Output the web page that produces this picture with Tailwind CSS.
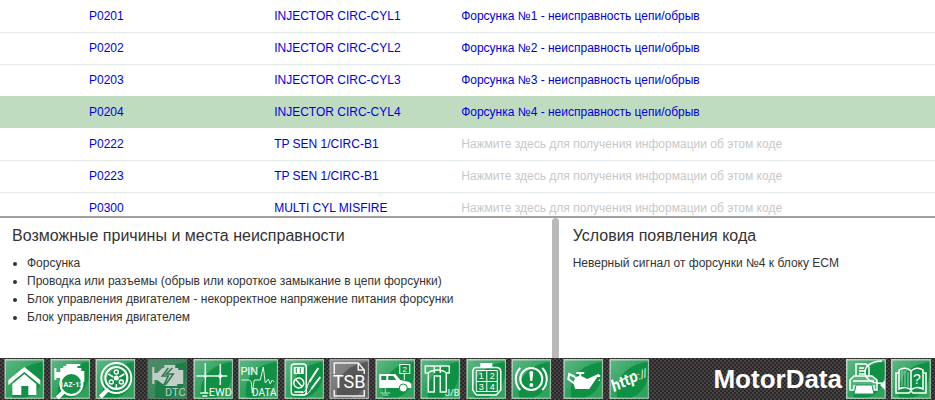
<!DOCTYPE html>
<html lang="ru">
<head>
  <title>MotorData</title>
  <meta charset="utf-8">
  <meta name="viewport" content="width=device-width, initial-scale=1.0">
  <script src="https://cdn.jsdelivr.net/npm/@tailwindcss/browser@4"></script>
</head>

<body class="flex flex-col h-screen overflow-hidden bg-white text-[#333] text-xs font-['Liberation_Sans',Arial,sans-serif]">

  <!-- shared button backgrounds -->
  <svg class="absolute w-0 h-0" aria-hidden="true">
    <defs>
      <linearGradient id="edge" x1="0" y1="0" x2="1" y2="1">
        <stop offset="0" stop-color="#c4d8ca" />
        <stop offset="1" stop-color="#8fb39c" />
      </linearGradient>
      <linearGradient id="face" x1="0" y1="0" x2="1" y2="1">
        <stop offset="0" stop-color="#5cb783" />
        <stop offset="0.5" stop-color="#2da35c" />
        <stop offset="1" stop-color="#2da35c" />
      </linearGradient>
      <linearGradient id="face-gray" x1="0" y1="0" x2="1" y2="1">
        <stop offset="0" stop-color="#8c8c8c" />
        <stop offset="1" stop-color="#606060" />
      </linearGradient>
      <linearGradient id="face-dim" x1="0" y1="0" x2="1" y2="1">
        <stop offset="0" stop-color="#4f8a68" />
        <stop offset="1" stop-color="#2a8a54" />
      </linearGradient>
      <symbol id="tile" viewBox="0 0 40 40">
        <rect width="40" height="40" fill="url(#edge)" />
        <rect x="1.5" y="1.5" width="37" height="37" fill="url(#face)" />
        <path d="M8 38.5C5 20 16 6 38.5 3V16C38 26 32 35 22 38.5Z" fill="#058a3c" opacity=".75" />
      </symbol>
      <symbol id="tile-gray" viewBox="0 0 40 40">
        <rect width="40" height="40" fill="#a8a8a8" />
        <rect x="1.5" y="1.5" width="37" height="37" fill="url(#face-gray)" />
        <path d="M8 38.5C5 20 16 6 38.5 3V16C38 26 32 35 22 38.5Z" fill="#4c4c4c" opacity=".75" />
      </symbol>
      <symbol id="tile-dim" viewBox="0 0 40 40">
        <rect width="40" height="40" fill="#587a66" />
        <rect x="1" y="1" width="38" height="38" fill="url(#face-dim)" />
        <path d="M8 39C5 20 16 6 39 3V16C38 26 32 35 22 39Z" fill="#157a40" opacity=".75" />
      </symbol>
    </defs>
  </svg>

  <main class="flex-1 min-h-0 overflow-hidden">
    <table class="w-full table-fixed text-left text-[#0000e0]">
      <colgroup>
        <col class="w-[29%]">
        <col class="w-[20%]">
        <col>
      </colgroup>
      <tbody>
        <tr class="h-8 border-b border-[#e4e9ec]">
          <td class="pl-[89px]"><a href="#p0201">P0201</a></td>
          <td class="pl-[3px]"><a href="#p0201">INJECTOR CIRC-CYL1</a></td>
          <td class="pl-[3px]"><a href="#p0201">Форсунка №1 - неисправность цепи/обрыв</a></td>
        </tr>
        <tr class="h-8 border-b border-[#e4e9ec]">
          <td class="pl-[89px]"><a href="#p0202">P0202</a></td>
          <td class="pl-[3px]"><a href="#p0202">INJECTOR CIRC-CYL2</a></td>
          <td class="pl-[3px]"><a href="#p0202">Форсунка №2 - неисправность цепи/обрыв</a></td>
        </tr>
        <tr class="h-8">
          <td class="pl-[89px]"><a href="#p0203">P0203</a></td>
          <td class="pl-[3px]"><a href="#p0203">INJECTOR CIRC-CYL3</a></td>
          <td class="pl-[3px]"><a href="#p0203">Форсунка №3 - неисправность цепи/обрыв</a></td>
        </tr>
        <tr class="h-8 bg-[#c0dcc0]">
          <td class="pl-[89px]"><a href="#p0204">P0204</a></td>
          <td class="pl-[3px]"><a href="#p0204">INJECTOR CIRC-CYL4</a></td>
          <td class="pl-[3px]"><a href="#p0204">Форсунка №4 - неисправность цепи/обрыв</a></td>
        </tr>
        <tr class="h-8 border-b border-[#e4e9ec]">
          <td class="pl-[89px]"><a href="#p0222">P0222</a></td>
          <td class="pl-[3px]"><a href="#p0222">TP SEN 1/CIRC-B1</a></td>
          <td class="pl-[3px]"><a href="#p0222" class="text-[#c8c8c8]">Нажмите здесь для получения информации об этом коде</a></td>
        </tr>
        <tr class="h-8 border-b border-[#e4e9ec]">
          <td class="pl-[89px]"><a href="#p0223">P0223</a></td>
          <td class="pl-[3px]"><a href="#p0223">TP SEN 1/CIRC-B1</a></td>
          <td class="pl-[3px]"><a href="#p0223" class="text-[#c8c8c8]">Нажмите здесь для получения информации об этом коде</a></td>
        </tr>
        <tr class="h-8">
          <td class="pl-[89px]"><a href="#p0300">P0300</a></td>
          <td class="pl-[3px]"><a href="#p0300">MULTI CYL MISFIRE</a></td>
          <td class="pl-[3px]"><a href="#p0300" class="text-[#c8c8c8]">Нажмите здесь для получения информации об этом коде</a></td>
        </tr>
      </tbody>
    </table>
  </main>

  <div class="flex h-[142px] border-t-2 border-[#a0a0a0]">
    <section class="w-[59%] px-3 pt-2">
      <h2 class="text-base leading-5">Возможные причины и места неисправности</h2>
      <ul class="list-disc pl-[15px] pt-2 leading-[18px]">
        <li>Форсунка</li>
        <li>Проводка или разъемы (обрыв или короткое замыкание в цепи форсунки)</li>
        <li>Блок управления двигателем - некорректное напряжение питания форсунки</li>
        <li>Блок управления двигателем</li>
      </ul>
    </section>
    <div class="w-[7px] rounded-t-sm bg-[#b9b9b9]"></div>
    <section class="flex-1 px-[14px] pt-2">
      <h2 class="text-base leading-5">Условия появления кода</h2>
      <p class="pt-2 leading-[18px]">Неверный сигнал от форсунки №4 к блоку ECM</p>
    </section>
  </div>

  <footer class="flex items-center h-[42px] px-1 text-white bg-[conic-gradient(#484446_25%,#2a2829_0_50%,#484446_0_75%,#2a2829_0)] bg-[length:4px_4px]">
    <nav class="grid grid-cols-3 gap-[5px] w-[132px]">
      <button type="button" aria-label="Home">
        <svg viewBox="0 0 40 40" class="block w-full h-10">
          <use href="#tile" />
          <path d="M4 21L20 8L36 21V26L20 13L4 26Z" fill="#fff" />
          <path d="M8 25L20 15L32 25V36H24V27H17V36H8Z" fill="#fff" />
        </svg>
      </button>
      <button type="button" aria-label="Engine">
        <svg viewBox="0 0 40 40" class="block w-full h-10">
          <use href="#tile" />
          <path d="M4 9H6V13H10V9H13V7H16V5H30V7H27V9H31V12H34V23H30V28H13L10 21V19H6V21H4Z" fill="#fff" />
          <circle cx="21" cy="25" r="11" fill="#169249" stroke="#fff" stroke-width="2" />
          <path d="M13 33L7 39" stroke="#fff" stroke-width="4" />
          <text x="21" y="28" text-anchor="middle" font-family="Roboto,sans-serif" font-size="7" font-weight="bold" fill="#fff">1AZ-13</text>
        </svg>
      </button>
      <button type="button" aria-label="Parts">
        <svg viewBox="0 0 40 40" class="block w-full h-10">
          <use href="#tile" />
          <path d="M13 30L5 38" stroke="#fff" stroke-width="4" />
          <g fill="none" stroke="#fff">
            <circle cx="21" cy="19" r="15" stroke-width="2" />
            <circle cx="21" cy="19" r="11" stroke-width="2" />
            <circle cx="21" cy="13" r="2" stroke-width="1.5" />
            <circle cx="16" cy="23" r="2" stroke-width="1.5" />
            <circle cx="26" cy="23" r="2" stroke-width="1.5" />
            <path d="M13 15L18 18M29 15L24 18M21 25V29" stroke-width="1.5" />
          </g>
          <circle cx="21" cy="19" r="2.5" fill="#fff" />
        </svg>
      </button>
    </nav>

    <nav class="grid grid-cols-9 gap-[5px] w-[405px] ml-[11px]">
      <button type="button" aria-label="DTC">
        <svg viewBox="0 0 40 40" class="block w-full h-10">
          <use href="#tile-dim" />
          <path d="M5 8H7V14H10L15 9H17V6H28V9H31V11H36V25H30V27H18L10 21H7V25H5Z" fill="#c3cec7" />
          <path d="M21 9L15 17L21 17L16 27M25 9L19 15L26 15L18 26" fill="none" stroke="#28784b" stroke-width="1.5" />
          <text x="28" y="37" text-anchor="middle" font-family="Roboto,sans-serif" font-size="11" fill="#c0d0c6">DTC</text>
        </svg>
      </button>
      <button type="button" aria-label="EWD">
        <svg viewBox="0 0 40 40" class="block w-full h-10">
          <use href="#tile" />
          <path d="M3 17H34M12 4V34M27 5V26M7 34H15M9 37H14" fill="none" stroke="#e9f5ee" stroke-width="1.5" />
          <circle cx="12" cy="17" r="1.5" fill="#fff" />
          <circle cx="27" cy="17" r="2" fill="#fff" />
          <text x="27" y="37" text-anchor="middle" font-family="Roboto,sans-serif" font-size="11" fill="#fff">EWD</text>
        </svg>
      </button>
      <button type="button" aria-label="PIN DATA">
        <svg viewBox="0 0 40 40" class="block w-full h-10">
          <use href="#tile" />
          <path d="M3 21H11L13 23L14 34L16 21H22L25 8L27 24L30 20L32 25L34 21L36 23" fill="none" stroke="#e4f2e9" />
          <text x="11" y="16" text-anchor="middle" font-family="Roboto,sans-serif" font-size="11" fill="#fff">PIN</text>
          <text x="26" y="37" text-anchor="middle" font-family="Roboto,sans-serif" font-size="10" fill="#fff">DATA</text>
        </svg>
      </button>
      <button type="button" aria-label="Multimeter">
        <svg viewBox="0 0 40 40" class="block w-full h-10">
          <use href="#tile" />
          <rect x="7" y="5" width="15" height="31" rx="3" fill="none" stroke="#fff" stroke-width="1.5" />
          <rect x="9.5" y="8" width="10" height="7" fill="#fff" />
          <path d="M12 9V14M16 9V14" stroke="#169249" />
          <circle cx="14.5" cy="24" r="5" fill="none" stroke="#fff" stroke-width="1.5" />
          <path d="M11 20L18 28M10 33H19" stroke="#fff" stroke-width="1.5" />
          <path d="M34 9L25 23M36 18L27 30" stroke="#fff" stroke-width="2" />
          <path d="M25 23C22 27 24 32 17 34M27 30C24 35 22 37 15 36" fill="none" stroke="#fff" />
        </svg>
      </button>
      <button type="button" aria-label="TSB">
        <svg viewBox="0 0 40 40" class="block w-full h-10">
          <use href="#tile-gray" />
          <path d="M5 15V4H29L35 11V15M29 4V11H35M5 31V37H35V31" fill="none" stroke="#f2f2f2" stroke-width="1.5" />
          <text x="20" y="29" text-anchor="middle" font-family="Roboto,sans-serif" font-size="18" fill="#fff">TSB</text>
        </svg>
      </button>
      <button type="button" aria-label="Component location">
        <svg viewBox="0 0 40 40" class="block w-full h-10">
          <use href="#tile" />
          <path d="M4 15H20L25 21L34 23L36 25V29H4Z" fill="#fff" />
          <path d="M6 17H11V21H6ZM13 17H18L21 21H13Z" fill="#15904a" />
          <circle cx="28" cy="29" r="4" fill="#fff" stroke="#15904a" />
          <path d="M10 29V34M5 34H15M7 36H13" stroke="#b8dcc6" />
          <path d="M29 15V21" stroke="#fff" />
          <rect x="24.5" y="5.5" width="10" height="9" fill="none" stroke="#fff" />
          <text x="29.5" y="13" text-anchor="middle" font-family="'Liberation Sans',sans-serif" font-size="8" fill="#fff">2</text>
        </svg>
      </button>
      <button type="button" aria-label="J/B">
        <svg viewBox="0 0 40 40" class="block w-full h-10">
          <use href="#tile" />
          <path d="M5 7H29V14H26V33H20V17H14V33H8V14H5ZM8 14C12 10 22 10 26 14M14 7V14M20 7V14" fill="none" stroke="#eef8f2" stroke-width="1.5" />
          <text x="32" y="37" text-anchor="middle" font-family="Roboto,sans-serif" font-size="9" fill="#fff">J/B</text>
        </svg>
      </button>
      <button type="button" aria-label="Connector">
        <svg viewBox="0 0 40 40" class="block w-full h-10">
          <use href="#tile" />
          <rect x="14" y="4" width="12" height="4" fill="#fff" />
          <path d="M10 8.5H30Q34.5 8.5 34.5 13V31L30 36H10L6.5 31V13Q6.5 8.5 10 8.5Z" fill="none" stroke="#fff" stroke-width="1.5" />
          <path d="M10 11.5H31V32.5H10ZM20.5 11.5V32.5M10 22.5H31" fill="none" stroke="#fff" />
          <g font-family="'Liberation Sans',sans-serif" font-size="9" fill="#fff" text-anchor="middle">
            <text x="15" y="20">1</text>
            <text x="26" y="20">2</text>
            <text x="15" y="31">3</text>
            <text x="26" y="31">4</text>
          </g>
        </svg>
      </button>
      <button type="button" aria-label="Warning lamps">
        <svg viewBox="0 0 40 40" class="block w-full h-10">
          <use href="#tile" />
          <circle cx="20" cy="20" r="11" fill="none" stroke="#fff" stroke-width="2" />
          <path d="M9 9C3 15 3 25 9 31M31 9C37 15 37 25 31 31" fill="none" stroke="#fff" stroke-width="2" />
          <path d="M18 13Q20 11 22 13L21 22H19Z" fill="#fff" />
          <circle cx="20" cy="26" r="2" fill="#fff" />
        </svg>
      </button>
    </nav>

    <nav class="grid grid-cols-2 gap-[5px] w-[86px] ml-[11px]">
      <button type="button" aria-label="Oil">
        <svg viewBox="0 0 40 40" class="block w-full h-10">
          <use href="#tile" />
          <path d="M12 18L16 17V15H13V13H21V15H18V17L24 20L35 15L37 16V18L34 18L26 30H12L10 24Z" fill="#fff" />
          <path d="M12 25L5 20L6 15L12 18" fill="none" stroke="#fff" stroke-width="2" />
          <path d="M36 20C38 23 34 23 36 20Z" fill="#fff" />
        </svg>
      </button>
      <button type="button" aria-label="http">
        <svg viewBox="0 0 40 40" class="block w-full h-10">
          <use href="#tile" />
          <text x="5" y="33" transform="rotate(-26 5 33)" font-family="Roboto,sans-serif" font-size="16" font-style="italic" font-weight="bold" fill="#fff">http<tspan font-size="11" font-weight="normal">://</tspan></text>
        </svg>
      </button>
    </nav>

    <strong class="ml-auto text-[26px] leading-8">MotorData</strong>

    <nav class="grid grid-cols-2 gap-[5px] w-[85px] ml-1">
      <button type="button" aria-label="Print preview">
        <svg viewBox="0 0 40 40" class="block w-full h-10">
          <use href="#tile" />
          <path d="M10 18V5H20L23 8V18M13 9H18M13 12H20M13 15H20" fill="none" stroke="#fff" stroke-width="1.5" />
          <path d="M4 31V21L8 17H26L31 21V31H28V27H8V31Z" fill="#58b37f" stroke="#fff" stroke-width="1.5" />
          <path d="M7 22H28" stroke="#fff" stroke-width="1.5" />
          <path d="M10 26H26L28 35H8Z" fill="#fff" stroke="#24945a" />
          <path d="M36 2C24 2 19 8 19 13C19 20 26 25 36 24" fill="none" stroke="#fff" stroke-width="1.5" />
          <path d="M34 26L39 21V31Z" fill="#fff" />
        </svg>
      </button>
      <button type="button" aria-label="Help">
        <svg viewBox="0 0 40 40" class="block w-full h-10">
          <use href="#tile" />
          <path d="M8 11C12 8 17 9 20 12C23 9 28 8 32 11V30C28 28 23 28 20 31C17 28 12 28 8 30ZM20 12V31M8 14H5V34H18L20 32L22 34H35V14H32" fill="none" stroke="#fff" stroke-width="1.5" />
          <path d="M11 12V27M14 12V27M17 13V28" stroke="#9fd3b5" />
          <text x="26" y="25" text-anchor="middle" font-family="'Liberation Sans',sans-serif" font-size="14" fill="#fff">?</text>
        </svg>
      </button>
    </nav>
  </footer>
</body>
</html>
